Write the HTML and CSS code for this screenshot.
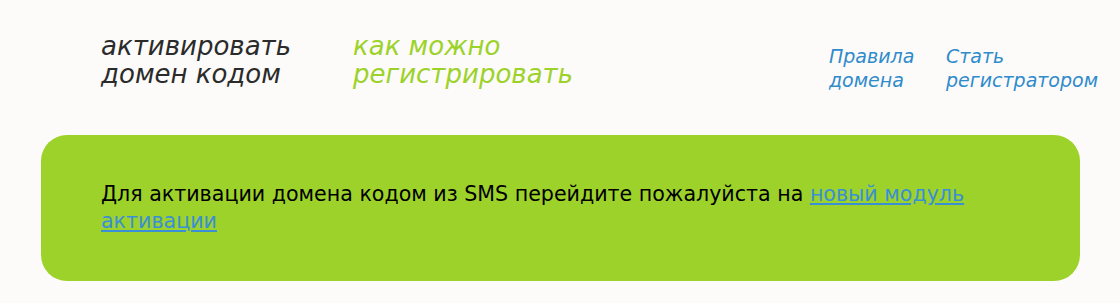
FILE: index.html
```html
<!DOCTYPE html>
<html>
  <head>
    <title>Активация домена</title>
    <meta charset="utf-8">
    <link rel="stylesheet" href="styles.css">
  </head>
  <body>
    <div class="header">
      <div class="menu">
        <a class="menu-item current" href="#">активировать<br>домен кодом</a>
        <a class="menu-item green" href="#">как можно<br>регистрировать</a>
      </div>
      <div class="links">
        <a class="link first" href="#">Правила<br>домена</a>
        <a class="link" href="#">Стать<br>регистратором</a>
      </div>
    </div>

    <div class="notice">
      <p>Для активации домена кодом из SMS перейдите пожалуйста на <a href="#">новый модуль активации</a></p>
    </div>
  </body>
</html>
```

FILE: styles.css
```css
body { margin: 0; background-color: #fcfbfa; font-family: "DejaVu Sans", sans-serif; }
.header { display: flex; justify-content: space-between; padding: 32px 0 0 101px; height: 135px; box-sizing: border-box; }
.menu { display: flex; gap: 58px; }
.menu-item { display: block; font-size: 26px; line-height: 28px; font-style: italic; text-decoration: none; color: #2b2b2b; width: 194px; white-space: nowrap; }
.menu-item.green { color: #9dd22a; }
.links { display: flex; padding-top: 12px; padding-right: 22px; }
.link { display: block; font-size: 19px; line-height: 24px; font-style: italic; text-decoration: none; color: #2f8bcb; white-space: nowrap; }
.link.first { width: 117px; }
.notice { margin: 0 40px 0 41px; background-color: #9dd22a; border-radius: 26px; height: 146px; padding: 46px 60px 0; box-sizing: border-box; }
.notice p { margin: 0; font-size: 20.6px; line-height: 27px; color: #000; max-width: 880px; }
.notice a { color: #3a8fd6; }
```
